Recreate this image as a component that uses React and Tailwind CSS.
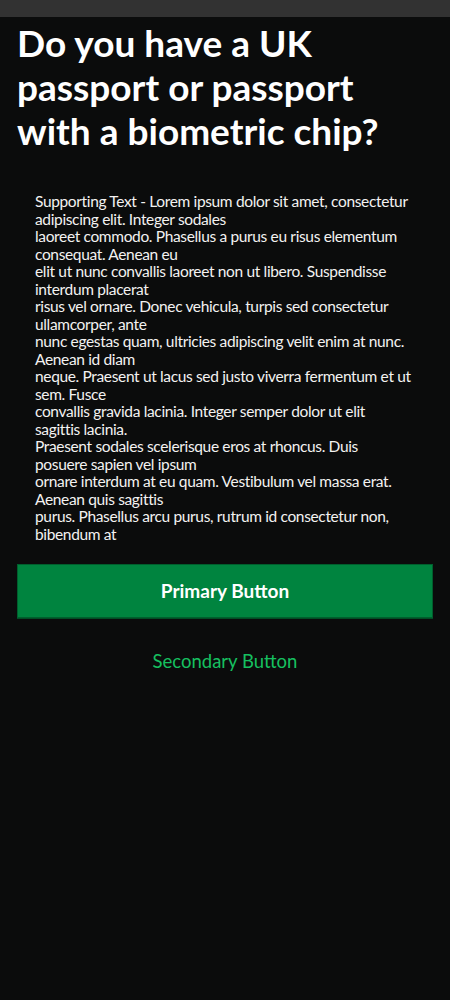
import React from 'react';

const supportingLines = [
  'Supporting Text - Lorem ipsum dolor sit amet, consectetur',
  'adipiscing elit. Integer sodales',
  'laoreet commodo. Phasellus a purus eu risus elementum',
  'consequat. Aenean eu',
  'elit ut nunc convallis laoreet non ut libero. Suspendisse',
  'interdum placerat',
  'risus vel ornare. Donec vehicula, turpis sed consectetur',
  'ullamcorper, ante',
  'nunc egestas quam, ultricies adipiscing velit enim at nunc.',
  'Aenean id diam',
  'neque. Praesent ut lacus sed justo viverra fermentum et ut',
  'sem. Fusce',
  'convallis gravida lacinia. Integer semper dolor ut elit',
  'sagittis lacinia.',
  'Praesent sodales scelerisque eros at rhoncus. Duis',
  'posuere sapien vel ipsum',
  'ornare interdum at eu quam. Vestibulum vel massa erat.',
  'Aenean quis sagittis',
  'purus. Phasellus arcu purus, rutrum id consectetur non,',
  'bibendum at',
];

const App = () => {
  return (
    <div className="min-h-screen w-full bg-[#0b0c0c] text-white font-['Lato',sans-serif]">
      {/* top status strip */}
      <div className="h-[17px] w-full bg-[#323232]" />

      <div className="px-[17px] pt-1">
        <h1 className="text-[37px] leading-[44px] font-bold">
          Do you have a UK<br />
          passport or passport<br />
          with a biometric chip?
        </h1>

        {/* supporting text */}
        <div className="mt-10 px-[18px] text-[15.5px] leading-[17.5px] tracking-[-0.35px] text-[#f3f2f1]">
          {supportingLines.map((line, i) => (
            <div key={i} className="whitespace-nowrap">{line}</div>
          ))}
        </div>

        <div className="mt-[21px] flex flex-col">
          <button className="h-[54px] w-full bg-[#00843f] border border-[#005f2d] shadow-[0_1px_0_#004d24] text-[19px] font-bold text-white">
            Primary Button
          </button>
          <button className="mt-[22px] h-11 w-full text-[18.5px] text-[#16c060]">
            Secondary Button
          </button>
        </div>
      </div>
    </div>
  );
};

export default App;
